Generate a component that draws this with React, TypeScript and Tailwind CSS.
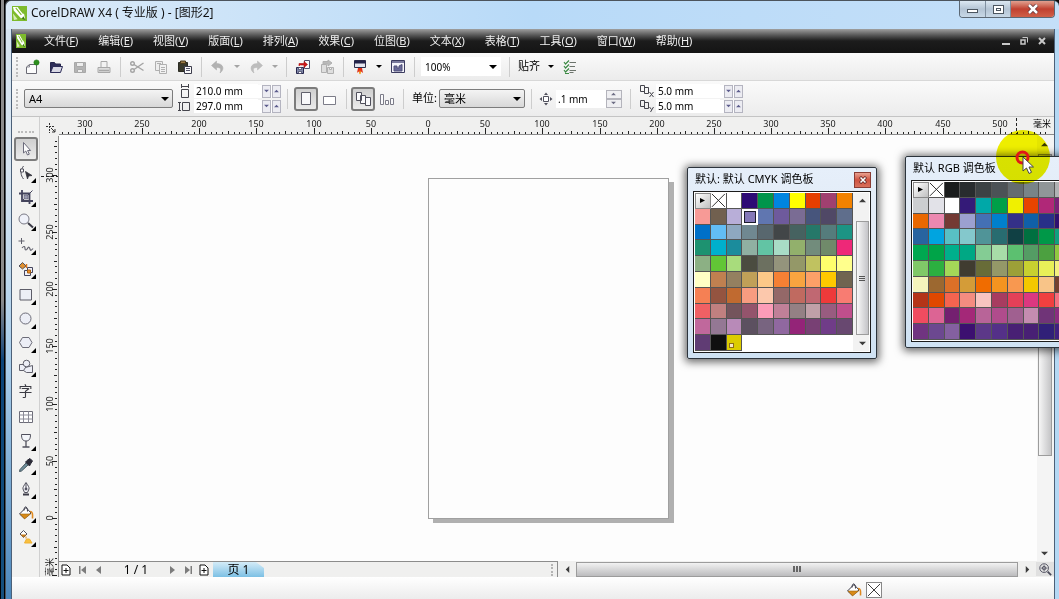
import React from "react";

const MENUS = [
    ["文件", "F"],
    ["编辑", "E"],
    ["视图", "V"],
    ["版面", "L"],
    ["排列", "A"],
    ["效果", "C"],
    ["位图", "B"],
    ["文本", "X"],
    ["表格", "T"],
    ["工具", "O"],
    ["窗口", "W"],
    ["帮助", "H"],
];

const CMYK = [
    "menu", "none", "#ffffff", "#2d0a75", "#00954b", "#0085e0", "#ffff00", "#e63f00", "#a04070", "#f38200",
    "#f79a96", "#71604f", "#b8aed8", "#8478b8", "#6076b0", "#6e5a9c", "#7a6c94", "#47557c", "#504866", "#5f6e8c",
    "#0070c8", "#62bdf5", "#8ea8c0", "#708891", "#58676e", "#424648", "#466260", "#257869", "#557c7c", "#1c9484",
    "#1d9270", "#00b0cc", "#1b8c9c", "#90b0a2", "#62c4a4", "#a8dcc6", "#92b06c", "#728c7c", "#708a6a", "#ee2878",
    "#8cb084", "#62c636", "#a8dc7c", "#4b4c40", "#6c7060", "#94947c", "#949868", "#c0c260", "#ffff6c", "#ffff8c",
    "#ffffc4", "#c08050", "#948060", "#c0a058", "#fcc888", "#f58034", "#f8a440", "#fca068", "#ffc800", "#706450",
    "#f58054", "#945440", "#c06a30", "#f89c80", "#fcc8ac", "#946868", "#c06a60", "#c06872", "#ee3a3a", "#f87c72",
    "#f06064", "#c08080", "#74545c", "#94546c", "#fc9cb8", "#c08098", "#948084", "#c0a0a8", "#985c80", "#c04f8c",
    "#c0689c", "#947894", "#b88ab8", "#5c5060", "#786480", "#9068a0", "#942478", "#784074", "#703c88", "#684870",
    "#603c74", "#101010", "#dccc00",
];

const RGB = [
    "menu", "none", "#1a1c1c", "#282c2e", "#3c4244", "#4c5256", "#646c70", "#788488", "#909698", "#b0b2b4",
    "#ccced0", "#e2e2e8", "#ffffff", "#341a78", "#00a8a8", "#009f48", "#f0f000", "#e84400", "#b02878", "#7a2078",
    "#ea6800", "#ec88b0", "#743a34", "#9ca0d0", "#4470b4", "#0080cc", "#343088", "#1060a8", "#283088", "#301070",
    "#2864a0", "#00a4e0", "#58c0c4", "#84c8cc", "#509498", "#286c70", "#104044", "#007040", "#009848", "#10a080",
    "#00a850", "#00a448", "#00b08c", "#00a884", "#84cc94", "#a8dca8", "#5cc070", "#549c64", "#4ca040", "#90c840",
    "#80c868", "#2cb040", "#a4d858", "#403c30", "#686c38", "#949868", "#9ca038", "#c8d030", "#e8f058", "#f4f080",
    "#f4f4bc", "#9c6830", "#dc7028", "#d49c38", "#f06c00", "#f49420", "#f89850", "#f4c800", "#f8c488", "#744030",
    "#b43418", "#e04800", "#f46450", "#f48c80", "#f8c4c0", "#a83c60", "#e44058", "#dc3880", "#f04040", "#f47080",
    "#f04c60", "#dc6494", "#742070", "#a42878", "#b86498", "#b04c8c", "#a06090", "#c48cb0", "#703478", "#8c2c80",
    "#703480", "#6c4890", "#8460a0", "#3c1070", "#5c3888", "#543088", "#482074", "#482074", "#302078", "#402080",
];

const Svg = ({ children, className = "size-4" }: { children: React.ReactNode; className?: string }) => (
    <svg viewBox="0 0 16 16" className={`${className} shrink-0`} fill="none" stroke="#4a4a5a" strokeWidth="1">
        {children}
    </svg>
);

const Bucket = () => (
    <>
        <path d="M1.500 9 8 2.500l5 5.500-6.500 5.500z" fill="#fff" stroke="#3c3c4a" />
        <path d="M2 9h10.500l-6 5z" fill="#d88a18" stroke="#9a6414" strokeWidth=".6" />
        <path d="M6 5.500c0-5 3.500-5 3.500 1" stroke="#3c3c4a" />
        <path d="M12 6.500c2.500 0 2.800 2 2.500 7" stroke="#e08a20" strokeWidth="1.600" />
    </>
);

const ICONS: Record<string, React.ReactNode> = {
    new: (
        <>
            <path d="M2.500 14.500V8l3-2.500h7v9z" fill="#fcfcfc" stroke="#6a6a74" />
            <path d="M2.500 8h3V5.500" stroke="#8a8a94" />
            <circle cx="12.500" cy="3.500" r="2.600" fill="#2f8f1e" stroke="#1d7a12" strokeWidth=".6" />
        </>
    ),
    open: (
        <>
            <path d="M2.500 13.500v-10h4l1 1.500h5v3" fill="#2c2c58" stroke="#26264c" />
            <path d="m2.500 13.500 2.500-6h9.500l-2 6z" fill="#d8d8e4" stroke="#2c2c58" />
        </>
    ),
    save: (
        <g stroke="#a8a8a8">
            <path d="M2.500 3.500h11v10h-11z" fill="#b4b4b4" />
            <path d="M4.500 3.500h7v4h-7zM5.500 10.500h5v3h-5z" fill="#ececec" />
        </g>
    ),
    print: (
        <g stroke="#a8a8a8">
            <path d="M5 8V2.500h6V8" fill="#f2f2f2" />
            <path d="M2 8.500h12v5H2z" fill="#dcdcdc" />
            <path d="M3 11.500h10" strokeWidth="1.500" />
        </g>
    ),
    cut: (
        <g stroke="#a4a4a4" strokeWidth="1.400">
            <circle cx="3.500" cy="4.500" r="1.800" />
            <circle cx="3.500" cy="11.500" r="1.800" />
            <path d="m5 5.500 9.500 6M5 10.500 14.500 4" />
        </g>
    ),
    copy: (
        <g stroke="#b0b0b0">
            <path d="M2.500 2.500h7v9h-7z" fill="#eee" />
            <path d="M6.500 5.500h7v9h-7z" fill="#f2f2f2" />
            <path d="M4 4.500h4M8 8.500h4M8 10.500h4M8 12.500h4" />
        </g>
    ),
    paste: (
        <>
            <path d="M1.500 3.500h9v9h-9z" fill="#3a3a2c" stroke="#2c2c24" />
            <path d="M3.500 2h5v2.500h-5z" fill="#9a7a44" stroke="#4a3a1c" />
            <path d="M7.500 7.500h7v7h-7z" fill="#fafafa" stroke="#3c3c4c" />
            <path d="M9 9.500h4M9 11.500h4" stroke="#55556a" />
        </>
    ),
    undo: <path d="M6.500 2 1.500 6.500l5 4.500V8.500c4 0 5 1 3.500 5.500 5-3.500 3.500-9.500-3.500-9.500z" fill="#b2b2b2" stroke="#a8a8a8" strokeWidth=".5" />,
    redo: <path d="m9.500 2 5 4.500-5 4.500V8.500c-4 0-5 1-3.500 5.500-5-3.500-3.500-9.500 3.500-9.500z" fill="#bdbdbd" stroke="#b4b4b4" strokeWidth=".5" />,
    import: (
        <>
            <path d="M9.500 1.500h5v8h-5z" fill="#fafafa" stroke="#50506a" />
            <path d="M1.500 8.500h7v6h-7z" fill="#8088a8" stroke="#26264c" />
            <path d="M3.500 8.500h3v2h-3zM3.500 12.500h3v2h-3z" fill="#fff" stroke="#26264c" strokeWidth=".6" />
            <path d="M4 7V4.500h5V2.500l3.500 3L9 8.500V6H6" fill="#d01818" stroke="#a81010" strokeWidth=".6" />
        </>
    ),
    export: (
        <g stroke="#b0b0b0" fill="#dedede">
            <path d="M2.500 5.500h5v8h-5zM8.500 8.500h6v6h-6z" />
            <path d="M4 5V2.500h5V1l4 3-4 3V5H6z" fill="#bababa" />
            <path d="M10.500 8.500h2v2h-2z" fill="#f4f4f4" />
        </g>
    ),
    launch: (
        <>
            <path d="M2.500 1.500h11v7h-11z" fill="#e4e6f0" stroke="#30304c" />
            <path d="M2.500 2h11v2h-11z" fill="#24244a" stroke="#24244a" />
            <path d="M6 9h4l1 5-2-1.500L8 15l-1.500-2.500L5 14z" fill="#e03018" stroke="none" />
            <path d="m8 11 1 3-1 1.500L7 14z" fill="#f8b020" stroke="none" />
        </>
    ),
    welcome: (
        <>
            <path d="M1.500 1.500h13v12h-13z" fill="#f4f4fa" stroke="#3c3c60" />
            <path d="M2 3h12" stroke="#7a7a9c" strokeWidth="2" />
            <path d="M4 7h3v2h2V7l3-1.500V12H4z" fill="#6a6a98" stroke="#50507a" />
        </>
    ),
    options: (
        <>
            <path d="M7.500 3.500h6.500M7.500 7.500h5.500M7.500 11.500h6.500M7.500 13.500h4" stroke="#6c746c" />
            <path d="m2 3 1.500 2L7 1.500M2 7l1.500 2L7 5.500M2 11l1.500 2L7 9.500M3 14.500h4" stroke="#3c8a44" strokeWidth="1.200" />
        </>
    ),
    portrait: <path d="M3.500 1.500h9v12h-9z" fill="#f8f8fa" stroke="#60606c" />,
    landscape: <path d="M1.500 5.500h12v8h-12z" fill="#fff" stroke="#7c7c88" />,
    allPages: (
        <g fill="#fafafc" stroke="#50505c">
            <path d="M1.500 1.500h5v8h-5zM5.500 4.500h5v8h-5zM10.500 6.500h5v8h-5z" />
        </g>
    ),
    onePage: (
        <g fill="#fafafc" stroke="#7c7c88">
            <path d="M1.500 3.500h3v10h-3zM6.500 9.500h3v4h-3zM11.500 7.500h3v6h-3z" />
        </g>
    ),
    nudge: (
        <>
            <path d="M5.500 5.500h5v5h-5z" fill="#fff" stroke="#50505c" />
            <path d="m8 1.500 2 2.500H6zM8 14.500l2-2.500H6zM1.500 8 4 6v4zM14.500 8 12 6v4z" fill="#50505c" stroke="none" />
        </>
    ),
    pick: <path d="M5.500 1.500v10.500l2.300-2 1.700 4 1.800-.8-1.700-3.700h3z" fill="#fcfcfc" stroke="#6c6c7c" />,
    shape: (
        <>
            <path d="M5.500 1C2 6 2.500 10 5.500 14" stroke="#50505c" />
            <path d="M2.500 4h3v3h-3z" fill="#fff" stroke="#50505c" />
            <path d="M7.500 6.500 14 10.500l-3.500.5-1 3z" fill="#34343c" stroke="#34343c" strokeWidth=".8" />
        </>
    ),
    crop: (
        <g stroke="#44445c">
            <path d="M4 1v11h11M1 4.500h10.500V15" strokeWidth="1.800" />
            <path d="M4.500 11.500 14.500 1.500" />
            <path d="M6 6h4v4H6z" fill="#9a9ab0" strokeWidth=".5" />
        </g>
    ),
    zoom: (
        <>
            <circle cx="6" cy="6" r="5" fill="#f0f2fa" stroke="#7a7a86" />
            <path d="m10 10 5 4.500" stroke="#3c3c48" strokeWidth="2" />
        </>
    ),
    freehand: (
        <g stroke="#60606c">
            <path d="M3.500 1v6M.5 4h6" />
            <path d="M4 11c2-2.500 3-1.500 3 .500s1.500 2 2.500 0 2-1.500 2.500.5 1.500 1.500 3-.5" strokeWidth="1.200" />
        </g>
    ),
    smart: (
        <>
            <path d="m1 5 3.500-3.500L8 5 4.500 8z" fill="#e09030" stroke="#50505c" />
            <path d="M8.500 3v4" stroke="#e07818" strokeWidth="1.500" />
            <path d="M9.500 6.500h5v5h-5z" fill="#eef0fa" stroke="#44445c" />
            <path d="M6.500 9.500h6v5h-6z" fill="#eef0fa" stroke="#44445c" />
            <path d="M9.500 9h3v3h-3z" fill="#f09028" stroke="#a86010" />
        </>
    ),
    rect: <path d="M2 2.500h11.500v10.500H2z" fill="#eceef6" stroke="#5c5c68" />,
    ellipse: <circle cx="7.500" cy="7.500" r="5.500" fill="#eceef6" stroke="#6c6c78" />,
    polygon: <path d="M4.500 2.500h6.500l3 5-3 5H4.500l-3-5z" fill="#eceef6" stroke="#6c6c78" />,
    shapes: (
        <g fill="#eceef6" stroke="#60606c">
            <path d="M1.500 5.500h6v6h-6z" />
            <circle cx="8.500" cy="4.500" r="3.300" />
            <path d="M7.500 8.500 14.500 6.500v7h-6l-3-2z" />
        </g>
    ),
    table: (
        <>
            <path d="M1.500 2.500h13v11h-13z" fill="#fff" stroke="#6c6c78" />
            <path d="M1.500 6h13M1.500 10h13M5.500 2.500v11M10.500 2.500v11" stroke="#8c8c98" />
        </>
    ),
    wine: (
        <>
            <path d="M3.500 1.500h9c0 4-1 6.500-4.500 6.500S3.500 5.500 3.500 1.500z" fill="#f4f6fa" stroke="#50505c" />
            <path d="M8 8v5.500M4.500 14h7" stroke="#50505c" strokeWidth="1.300" />
        </>
    ),
    eyedropper: (
        <>
            <path d="m8.500 5.500 2 2-7 6.500-2 .500.500-2z" fill="#70909c" stroke="#44545c" />
            <path d="m7.500 5 4 4 1-2 2-3-2.500-2.500-3 2z" fill="#2c2c38" stroke="#2c2c38" />
        </>
    ),
    pen: (
        <>
            <path d="M8 1.500c-2 3-3.500 5-3 6.500l1.500 3.500h3L11 8c.5-1.500-1-3.500-3-6.500zM8 2v6" fill="#f4f4f8" stroke="#50505c" />
            <circle cx="8" cy="8" r="1" fill="#50505c" />
            <path d="M5 13.500h6" stroke="#3c3c48" strokeWidth="2" />
        </>
    ),
    fill: <Bucket />,
    mesh: (
        <>
            <path d="m2 5 3.500-3.500L9 5 5.500 8.500z" fill="#fff" stroke="#50505c" />
            <path d="M2.500 5.500h6l-3 3z" fill="#c87c18" stroke="none" />
            <path d="M8 7.500v2" stroke="#e08a20" />
            <path d="M6.500 14 8.500 10h3l2.500 4z" fill="#f8c040" stroke="#f0b030" />
        </>
    ),
};

const TOOL_GROUPS = [
    ["pick", "shape", "crop", "zoom", "freehand", "smart"],
    ["rect", "ellipse", "polygon", "shapes", "text"],
    ["table", "wine", "eyedropper", "pen", "fill", "mesh"],
];
const PLAIN_TOOLS = ["pick", "text", "table"];

const Caret = ({ className = "" }: { className?: string }) => (
    <svg viewBox="0 0 8 4" className={`w-2 h-1 shrink-0 ${className}`}>
        <path d="M0 0h8L4 4z" fill="currentColor" />
    </svg>
);

const Arrow = ({ dir }: { dir: "up" | "down" | "left" | "right" }) => {
    const paths = { up: "M0 6h8L4 2z", down: "M0 2h8L4 6z", left: "M6 0v8L2 4z", right: "M2 0v8l4-4z" };
    return (
        <svg viewBox="0 0 8 8" className="size-[7px] shrink-0">
            <path d={paths[dir]} fill="#3c3c3c" />
        </svg>
    );
};

const Grip = () => <div className="ml-1 mr-0.5 h-5 border-l-2 border-dotted border-[#bcbcbc]" />;
const Sep = () => <div className="mx-1 h-5 w-px bg-[#cdcdcd]" />;

const ToolButton = ({ name, active }: { name: string; active?: boolean }) => (
    <button
        aria-label={name}
        className={
            active
                ? "flex size-6 items-center justify-center rounded-[3px] border-2 border-[#7c7c7c] bg-linear-to-b from-[#cfcfcf] to-[#ebebeb]"
                : "flex size-6 items-center justify-center"
        }
    >
        <Svg>{ICONS[name]}</Svg>
    </button>
);

const DropCaret = ({ muted }: { muted?: boolean }) => (
    <button aria-label="more" className={`flex h-6 w-3.5 items-center justify-center ${muted ? "text-[#a4a4a4]" : "text-black"}`}>
        <svg viewBox="0 0 6 3" className="h-[3px] w-1.5">
            <path d="M0 0h6L3 3z" fill="currentColor" />
        </svg>
    </button>
);

const Select = ({ value, label, className }: { value: string; label: string; className: string }) => (
    <div className="relative flex items-center">
        <select aria-label={label} className={`h-[19px] appearance-none pl-1 leading-none outline-none ${className}`}>
            <option>{value}</option>
        </select>
        <Caret className="pointer-events-none absolute right-1" />
    </div>
);

const SizeField = ({ label, value, icon }: { label: string; value: string; icon: React.ReactNode }) => (
    <label className="flex h-[15px] items-center">
        <svg viewBox="0 0 15 14" className="mr-0.5 h-3.5 w-[15px]" fill="none" stroke="#44444c">
            {icon}
        </svg>
        <input aria-label={label} defaultValue={value} className="h-3.5 w-16 bg-white px-0.5 text-[10px] outline-none" />
        <span className="flex gap-px bg-white pl-1">
            {["M0 1h6L3 4z", "M0 4h6L3 1z"].map((d) => (
                <button key={d} aria-label={label} className="flex h-[13px] w-[9px] items-center justify-center border border-[#b4b4c0] bg-[#ececf2]">
                    <svg viewBox="0 0 6 5" className="h-1 w-[5px]">
                        <path d={d} fill="#5c5c8c" />
                    </svg>
                </button>
            ))}
        </span>
    </label>
);

const Logo = ({ className }: { className: string }) => (
    <svg viewBox="0 0 16 16" preserveAspectRatio="none" className={className}>
        <path d="M0 0h16v16H0z" fill="#7dbb2c" />
        <path d="M1 1h5l7 8 1 5-5-1.500L2 5z" fill="#fff" />
        <path d="m4 2 6 7.500M7.500 2l4.500 6" stroke="#7dbb2c" strokeWidth="1.200" />
        <path d="m1 8 5 6-4 1z" fill="#d8ecb8" />
        <path d="m12 11 2.500 4-4-1.500z" fill="#3a7a14" />
    </svg>
);

const UNIT = 1.1434;

const HorizontalRuler = () => {
    const ticks = [];
    for (let mm = -320; mm <= 540; mm += 5) ticks.push(mm);
    return (
        <svg className="h-[18px] w-full shrink-0 bg-[#f0f0ef]" fontFamily="'Noto Sans', 'Noto Sans CJK SC', sans-serif">
            {ticks.map((mm) => {
                const x = Math.round(369 + mm * UNIT);
                const h = mm % 50 === 0 ? 6 : mm % 25 === 0 ? 3 : 2;
                return <rect key={mm} x={x} y={17 - h} width="1" height={h} fill="#222" />;
            })}
            {ticks.filter((mm) => mm % 50 === 0 && mm >= -300 && mm <= 500).map((mm) => (
                <text key={mm} x={Math.round(369 + mm * UNIT)} y="10" fontSize="9" textAnchor="middle" fill="#222">
                    {Math.abs(mm)}
                </text>
            ))}
            <path d="M957.500 1v16" stroke="#222" strokeDasharray="3 2" />
            <text x="974" y="10" fontSize="9" fill="#000">毫米</text>
            <path d="M0 17.500h1100" stroke="#8c8c8c" />
        </svg>
    );
};

const VerticalRuler = () => {
    const ticks = [];
    for (let mm = 335; mm >= -50; mm -= 5) ticks.push(mm);
    return (
        <svg className="min-h-0 w-full flex-1" fontFamily="'Noto Sans', 'Noto Sans CJK SC', sans-serif">
            {ticks.map((mm) => {
                const w = mm % 50 === 0 ? 5 : mm % 25 === 0 ? 3 : 2;
                return <rect key={mm} x={17 - w} y={Math.round(382 - mm * UNIT)} width={w} height="1" fill="#222" />;
            })}
            {ticks.filter((mm) => mm % 50 === 0 && mm >= 0).map((mm) => (
                <text
                    key={mm}
                    transform={`translate(13 ${Math.round(382 - mm * UNIT)}) rotate(-90)`}
                    fontSize="9"
                    textAnchor="middle"
                    fill="#222"
                >
                    {mm}
                </text>
            ))}
            <path d="M1 40.500h17" stroke="#222" strokeDasharray="3 2" />
            <text transform="translate(13 440) rotate(-90)" fontSize="9" fill="#222">毫米</text>
            <path d="M18.500 0v1000" stroke="#8c8c8c" />
        </svg>
    );
};

const Cross = () => (
    <svg viewBox="0 0 16 16" className="size-full bg-white">
        <path d="M1 1l14 14M15 1L1 15" stroke="#222" />
    </svg>
);

interface PaletteProps {
    title: string;
    colors: string[];
    selected?: string;
    marked?: string;
    className: string;
}

const Palette = ({ title, colors, selected, marked, className }: PaletteProps) => (
    <section
        className={`absolute w-[190px] rounded-[2px] border border-[#2c343c] bg-linear-to-b from-[#e6effa] via-[#dfe9f4] to-[#cfe2f3] px-[5px] pb-[5px] shadow-[0_1px_8px_2px_rgba(0,0,0,0.6)] ${className}`}
    >
        <header className="flex h-[23px] items-center justify-between pl-0.5">
            <h2 className="text-[11px] whitespace-nowrap text-black">{title}</h2>
            <button aria-label="close" className="flex h-4 w-[17px] items-center justify-center border border-[#8a3c34] bg-linear-to-b from-[#e8a090] via-[#cf5240] to-[#d8705c]">
                <svg viewBox="0 0 8 8" className="size-2">
                    <path d="m1 1 6 6M7 1 1 7" stroke="#5c2020" strokeWidth="3" />
                    <path d="m1.500 1.500 5 5M6.500 1.500l-5 5" stroke="#fff" strokeWidth="1.600" />
                </svg>
            </button>
        </header>
        <div className="flex border border-[#1c1c1c] bg-white p-px">
            <div className="grid h-[158px] w-[158px] grid-cols-10 grid-rows-10">
                {colors.map((color, i) => {
                    if (color === "menu")
                        return (
                            <button key={i} aria-label="menu" className="flex items-center justify-center border border-[#888] bg-linear-to-br from-white to-[#c0c0c0]">
                                <svg viewBox="0 0 6 6" className="size-[5px]">
                                    <path d="M0 0v6l6-3z" />
                                </svg>
                            </button>
                        );
                    if (color === "none")
                        return (
                            <button key={i} aria-label="none" className="border-r border-b border-[#555]">
                                <Cross />
                            </button>
                        );
                    return (
                        <button
                            key={i}
                            aria-label={color}
                            style={{ backgroundColor: color }}
                            className={
                                color === selected
                                    ? "border-2 border-white outline-1 -outline-offset-3 outline-[#1c1c2c]"
                                    : "flex items-end border-r border-b border-[#555]"
                            }
                        >
                            {color === marked && <span className="mb-0.5 ml-0.5 size-[5px] border border-[#8c6c1c] bg-[#f8e8c0]" />}
                        </button>
                    );
                })}
            </div>
            <div className="flex flex-1 flex-col items-center bg-[#f2f2f2] pl-0.5">
                <div className="flex h-7 items-start pt-1">
                    <Arrow dir="up" />
                </div>
                <div className="flex w-[13px] flex-1 flex-col items-center justify-center gap-px border border-[#9c9c9c] bg-linear-to-r from-[#f8f8f8] to-[#c4c4c8]">
                    <span className="h-px w-1.5 bg-[#555]" />
                    <span className="h-px w-1.5 bg-[#555]" />
                    <span className="h-px w-1.5 bg-[#555]" />
                </div>
                <div className="flex h-4 items-center">
                    <Arrow dir="down" />
                </div>
            </div>
        </div>
    </section>
);

const TitleBar = () => (
    <header className="flex h-7 items-start justify-between">
        <div className="flex h-full items-center gap-1 pb-1">
            <Logo className="size-[15px]" />
            <h1 className="text-xs text-[#111]">CorelDRAW X4 ( 专业版 ) - [图形2]</h1>
        </div>
        <div className="flex h-[17px] overflow-hidden rounded-b-[4px] border border-t-0 border-[#5c6874] text-white">
            <button aria-label="minimize" className="flex w-[26px] items-center justify-center border-r border-[#8090a0] bg-linear-to-b from-[#dce8f2] via-[#b4c4d4] to-[#c8d8e6] pt-1">
                <span className="h-1 w-[11px] border border-[#4c5660] bg-white" />
            </button>
            <button aria-label="restore" className="flex w-[25px] items-center justify-center border-r border-[#8090a0] bg-linear-to-b from-[#dce8f2] via-[#b4c4d4] to-[#c8d8e6]">
                <span className="h-[9px] w-[11px] border border-[#4c5660] bg-white p-0.5">
                    <span className="block size-full border border-[#4c5660]" />
                </span>
            </button>
            <button aria-label="close" className="flex w-[43px] items-center justify-center bg-linear-to-b from-[#e0a090] via-[#c04030] to-[#d06048]">
                <svg viewBox="0 0 12 10" className="h-2.5 w-3">
                    <path d="m2 1 8 8M10 1 2 9" stroke="#5c3034" strokeWidth="4" />
                    <path d="m2 1 8 8M10 1 2 9" stroke="#fff" strokeWidth="2.500" />
                </svg>
            </button>
        </div>
    </header>
);

const MenuBar = () => (
    <nav className="flex h-6 shrink-0 items-center bg-linear-to-b from-[#a0a0a0] via-[#1c1c1c] via-50% to-[#141414] pl-1 text-[11px] text-[#f0f0f0]">
        <Logo className="h-3.5 w-2.5" />
        <div className="ml-[18px] flex gap-5">
            {MENUS.map(([name, key]) => (
                <button key={key} className="whitespace-nowrap">
                    {name}(<u>{key}</u>)
                </button>
            ))}
        </div>
        <div className="ml-auto flex items-center gap-2.5 pr-2">
            <button aria-label="minimize document" className="flex h-2 w-2 items-end">
                <span className="h-0.5 w-full bg-[#c8c8c8]" />
            </button>
            <button aria-label="restore document">
                <svg viewBox="0 0 8 8" className="size-2" fill="none" stroke="#c8c8c8">
                    <path d="M1 3h4v4H1z" strokeWidth="1.500" />
                    <path d="M2.500.5h5v5" />
                </svg>
            </button>
            <button aria-label="close document">
                <svg viewBox="0 0 8 8" className="size-2">
                    <path d="m1 1 6 6M7 1 1 7" stroke="#c8c8c8" strokeWidth="2" />
                </svg>
            </button>
        </div>
    </nav>
);

const StandardBar = () => (
    <div className="flex h-7 shrink-0 items-center border-b border-[#d8d8d8] bg-linear-to-b from-[#fafafa] to-[#ececec] text-[11px]">
        <Grip />
        <ToolButton name="new" />
        <ToolButton name="open" />
        <ToolButton name="save" />
        <ToolButton name="print" />
        <Sep />
        <ToolButton name="cut" />
        <ToolButton name="copy" />
        <ToolButton name="paste" />
        <Sep />
        <ToolButton name="undo" />
        <DropCaret muted />
        <ToolButton name="redo" />
        <DropCaret muted />
        <Sep />
        <ToolButton name="import" />
        <ToolButton name="export" />
        <Sep />
        <ToolButton name="launch" />
        <DropCaret />
        <ToolButton name="welcome" />
        <Sep />
        <Select value="100%" label="zoom level" className="ml-0.5 w-20 bg-white text-[10px]" />
        <div className="px-1">
            <Sep />
        </div>
        <button className="pr-1">贴齐</button>
        <DropCaret />
        <ToolButton name="options" />
    </div>
);

const PropertyBar = () => (
    <div className="flex h-9 shrink-0 items-center border-b border-[#c4c4c4] bg-linear-to-b from-[#fafafa] to-[#ececec] text-[11px]">
        <Grip />
        <Select
            value="A4"
            label="paper"
            className="ml-1 w-[149px] rounded-[2px] border border-[#7c7c7c] bg-linear-to-b from-[#f4f4f4] to-[#d8d8d8]"
        />
        <div className="ml-1 flex flex-col">
            <SizeField label="width" value="210.0 mm" icon={<path d="M4.500 5.500h7v8h-7zM4.500 0v4M11.500 0v4M5 2.500h6" />} />
            <SizeField label="height" value="297.0 mm" icon={<path d="M5.500 3.500h7v8h-7zM2.500 3v9M1 3.500h3M1 11.500h3" />} />
        </div>
        <div className="px-0.5">
            <Sep />
        </div>
        <ToolButton name="portrait" active />
        <ToolButton name="landscape" />
        <Sep />
        <ToolButton name="allPages" active />
        <ToolButton name="onePage" />
        <Sep />
        <label className="ml-1 flex items-center gap-0.5">
            单位:
            <Select value="毫米" label="单位" className="w-[86px] rounded-[2px] border border-[#7c7c7c] bg-linear-to-b from-[#f4f4f4] to-[#d8d8d8]" />
        </label>
        <div className="px-0.5">
            <Sep />
        </div>
        <label className="flex items-center gap-0.5">
            <Svg>{ICONS.nudge}</Svg>
            <input aria-label="nudge" defaultValue=".1 mm" className="h-[18px] w-[50px] bg-white px-0.5 text-[10px] outline-none" />
        </label>
        <div className="flex flex-col">
            {["M0 4h6L3 1z", "M0 1h6L3 4z"].map((d) => (
                <button key={d} aria-label="step" className="flex h-[9px] w-4 items-center justify-center border border-[#b4b4bc] bg-[#efeff2]">
                    <svg viewBox="0 0 6 5" className="h-1 w-[5px]">
                        <path d={d} fill="#6c6c84" />
                    </svg>
                </button>
            ))}
        </div>
        <div className="px-1">
            <Sep />
        </div>
        <div className="flex flex-col">
            <SizeField label="duplicate x" value="5.0 mm" icon={<path d="M1.500 1.500h4v6h-4zM5.500 3.500h4v6h-4zM10.500 8l4 5M14.500 8l-4 5" />} />
            <SizeField label="duplicate y" value="5.0 mm" icon={<path d="M1.500 1.500h4v6h-4zM5.500 3.500h4v6h-4zM10.500 8l2 2.500M14.500 8l-3 5" />} />
        </div>
    </div>
);

const Toolbox = () => (
    <aside className="flex w-7 shrink-0 flex-col items-center gap-0.5 border-r border-[#d0d0d0] bg-[#f2f2f1] pt-3.5">
        <div className="mb-0.5 w-4 border-t-2 border-dotted border-[#bcbcbc]" />
        {TOOL_GROUPS.map((group, i) => (
            <div key={i}>
                {group.map((name) => (
                    <div key={name} className="relative">
                        {name === "text" ? (
                            <button className="flex size-6 items-center justify-center text-sm leading-none text-[#3c3c44]">字</button>
                        ) : (
                            <ToolButton name={name} active={name === "pick"} />
                        )}
                        {!PLAIN_TOOLS.includes(name) && (
                            <svg viewBox="0 0 5 5" className="absolute right-0.5 bottom-0.5 size-[5px]">
                                <path d="M5 0v5H0z" />
                            </svg>
                        )}
                    </div>
                ))}
            </div>
        ))}
    </aside>
);

const PageGlyph = () => (
    <svg viewBox="0 0 10 12" className="h-3 w-2.5" fill="#fff" stroke="#111">
        <path d="M1 1h5l3 3v7H1zM5 4v5M2.500 6.500h5" />
    </svg>
);

const NavGlyph = ({ d }: { d: string }) => (
    <svg viewBox="0 0 8 8" className="size-2">
        <path d={d} fill="#7c7c7c" />
    </svg>
);

const PageBar = () => (
    <div className="flex h-4 shrink-0 bg-[#f0f0ef]">
        <div className="flex flex-1 items-center border-t border-r border-[#8c8c8c] pl-0.5 text-xs">
            <div className="flex items-center gap-2">
                <button aria-label="add page before"><PageGlyph /></button>
                <button aria-label="first page"><NavGlyph d="M0 0h1.500v8H0zM7 0v8L2 4z" /></button>
                <button aria-label="previous page"><NavGlyph d="M6 0v8L1 4z" /></button>
            </div>
            <span className="w-[66px] text-center">1 / 1</span>
            <div className="flex items-center gap-[7px]">
                <button aria-label="next page"><NavGlyph d="M1 0v8l5-4z" /></button>
                <button aria-label="last page"><NavGlyph d="M6.500 0H8v8H6.500zM1 0v8l5-4z" /></button>
                <button aria-label="add page after"><PageGlyph /></button>
            </div>
            <button className="ml-1 h-full w-[51px] bg-linear-to-b from-[#d4ecf8] to-[#7cc0e4] leading-none [clip-path:polygon(0_0,84%_0,100%_40%,100%_100%,0_100%)]">
                页 1
            </button>
            <div className="mr-1 ml-auto h-3 border-l-2 border-dotted border-[#b4b4b4]" />
        </div>
        <div className="flex flex-1 items-center bg-[#f0f0ef]">
            <button aria-label="scroll left" className="flex w-[18px] justify-center"><Arrow dir="left" /></button>
            <div className="flex h-[15px] flex-1 items-center justify-center gap-px border border-[#9c9c9c] bg-linear-to-b from-[#f2f2f2] to-[#bcbcbe]">
                <span className="h-1.5 w-0.5 bg-[#666]" />
                <span className="h-1.5 w-0.5 bg-[#666]" />
                <span className="h-1.5 w-0.5 bg-[#666]" />
            </div>
            <button aria-label="scroll right" className="flex w-[18px] justify-center"><Arrow dir="right" /></button>
            <button aria-label="navigator" className="flex w-[18px] justify-center bg-[#e0e0e0]">
                <Svg className="size-3.5">
                    <circle cx="7" cy="7" r="5" />
                    <circle cx="7" cy="7" r="2" />
                    <path d="M7 3v8M3 7h8" strokeWidth=".7" />
                    <path d="m11 11 4 4" strokeWidth="2" />
                </Svg>
            </button>
        </div>
    </div>
);

const WorkArea = () => (
    <div className="flex min-h-0 flex-1">
        <Toolbox />
        <div className="flex w-[19px] shrink-0 flex-col bg-[#f0f0ef]">
            <svg viewBox="0 0 19 19" className="h-[19px] w-full shrink-0" stroke="#333" fill="none">
                <path d="M6 9.500h8M9.500 6v10" strokeDasharray="2 1" />
                <path d="m11 11 4 4M12 15h3v-3" />
            </svg>
            <VerticalRuler />
        </div>
        <div className="flex min-w-0 flex-1 flex-col">
            <HorizontalRuler />
            <div className="flex min-h-0 flex-1">
                <main className="relative min-w-0 flex-1 overflow-hidden bg-[#fdfdfd]">
                    <div className="absolute top-[43px] left-[369px] h-[341px] w-[241px] border border-[#a0a0a0] bg-[#fdfdfd] shadow-[5px_4px_0_#b0b0b0]" />
                </main>
                <div className="flex w-[17px] flex-col items-center bg-[#f4f4f4] pr-0.5">
                    <button aria-label="scroll up" className="py-1.5"><Arrow dir="up" /></button>
                    <div className="w-3.5 flex-10 border border-[#9c9c9c] bg-linear-to-r from-[#f6f6f6] to-[#c4c4c6]" />
                    <div className="flex-3" />
                    <button aria-label="scroll down" className="py-1"><Arrow dir="down" /></button>
                </div>
            </div>
            <PageBar />
        </div>
    </div>
);

const StatusBar = () => (
    <footer className="flex h-[22px] shrink-0 items-center bg-linear-to-b from-white to-[#ececec] pt-1">
        <div className="w-4/5" />
        <Svg>
            <Bucket />
        </Svg>
        <span className="ml-1 size-4 border border-[#888]">
            <Cross />
        </span>
    </footer>
);

export default function App() {
    return (
        <div className="relative flex h-screen overflow-hidden bg-[#0c0c0c] font-['Noto_Sans','Noto_Sans_CJK_SC',sans-serif] text-black">
            {/* Desktop strip left of the window */}
            <div className="w-[5px] shrink-0 border-x border-black bg-linear-to-b from-[#8c8c8c] from-50% via-[#0c4478] via-60% to-[#15507e]" />
            <div className="flex min-w-0 flex-1 flex-col rounded-t-[6px] border-t border-l border-[#4c545c] bg-linear-to-r from-[#dcebf8] via-[#b8daf8] via-50% to-[#c4dff8]">
                <div className="pr-1 pl-1.5">
                    <TitleBar />
                </div>
                <div className="flex min-h-0 flex-1">
                    <div className="w-1.5 shrink-0 border-r border-[#4c6078] bg-linear-to-b from-[#d8e6f2] from-25% via-[#a8cdea] via-60% to-[#4c88bc]" />
                    <div className="flex min-w-0 flex-1 flex-col bg-[#f0f0ef]">
                        <MenuBar />
                        <StandardBar />
                        <PropertyBar />
                        <WorkArea />
                        <StatusBar />
                    </div>
                    <div className="w-[5px] shrink-0 border-l border-[#4c6078] bg-[#b4d8f4]" />
                </div>
            </div>
            <Palette title="默认: 默认 CMYK 调色板" colors={CMYK} selected="#8478b8" marked="#dccc00" className="top-[167px] left-[687px]" />
            <Palette title="默认 RGB 调色板" colors={RGB} className="top-[156px] left-[905px]" />
            {/* Pointer with its click highlight */}
            <div className="pointer-events-none absolute top-[130px] left-[996px] size-[54px] rounded-full bg-[#f0f000] mix-blend-multiply" />
            <svg viewBox="0 0 24 28" className="pointer-events-none absolute top-[149px] left-[1014px] h-7 w-6">
                <circle cx="8.500" cy="8.500" r="5.500" fill="none" stroke="#e01818" strokeWidth="3" />
                <path d="M9 8v14l3.500-3 2.500 5.500 2.500-1.200-2.500-5.300h4.500z" fill="#fff" stroke="#444" />
            </svg>
        </div>
    );
}
